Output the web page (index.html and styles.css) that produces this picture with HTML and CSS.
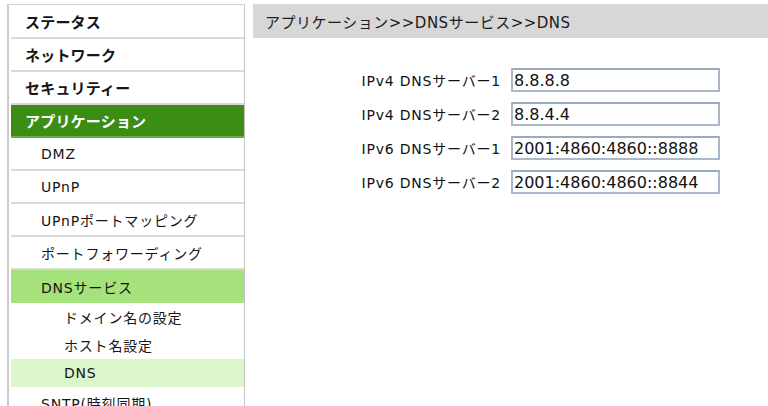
FILE: index.html
```html
<!DOCTYPE html>
<html lang="ja">
<head>
<meta charset="utf-8">
<title>DNS</title>
<link rel="stylesheet" href="styles.css">
</head>
<body>
<div class="page">
  <nav class="sidebar">
    <div class="item main">ステータス</div>
    <div class="item main">ネットワーク</div>
    <div class="item main">セキュリティー</div>
    <div class="item main active">アプリケーション</div>
    <div class="item sub">DMZ</div>
    <div class="item sub">UPnP</div>
    <div class="item sub">UPnPポートマッピング</div>
    <div class="item sub">ポートフォワーディング</div>
    <div class="item sub open">DNSサービス</div>
    <div class="item subsub">ドメイン名の設定</div>
    <div class="item subsub">ホスト名設定</div>
    <div class="item subsub current">DNS</div>
    <div class="item sub">SNTP(時刻同期)</div>
  </nav>
  <main class="content">
    <div class="crumb">アプリケーション&gt;&gt;DNSサービス&gt;&gt;DNS</div>
    <form class="form">
      <label class="label" for="v4a">IPv4 DNSサーバー1</label>
      <input class="field" id="v4a" type="text" value="8.8.8.8">
      <label class="label" for="v4b">IPv4 DNSサーバー2</label>
      <input class="field" id="v4b" type="text" value="8.8.4.4">
      <label class="label" for="v6a">IPv6 DNSサーバー1</label>
      <input class="field" id="v6a" type="text" value="2001:4860:4860::8888">
      <label class="label" for="v6b">IPv6 DNSサーバー2</label>
      <input class="field" id="v6b" type="text" value="2001:4860:4860::8844">
    </form>
  </main>
</div>
</body>
</html>
```
FILE: styles.css
```css
html, body {
  margin: 0;
  padding: 0;
  background: #ffffff;
  overflow: hidden;
}

body {
  font-family: "DejaVu Sans", "Noto Sans CJK JP", sans-serif;
  color: #1e1e1e;
  height: 406px;
}

.page {
  display: flex;
  align-items: flex-start;
  padding-top: 4px;
}

.sidebar {
  margin-left: 7px;
  width: 233px;
  border-left: 2px solid #cbcbcb;
  border-right: 1px solid #c6c6c6;
  border-top: 1px solid #d2d2d2;
  padding-left: 2px;
  padding-top: 1px;
  height: 420px;
  flex: none;
}

.item {
  box-sizing: border-box;
  display: flex;
  align-items: center;
  height: 33px;
  border-bottom: 2px solid #dadada;
  font-size: 14px;
  white-space: nowrap;
  color: #151515;
}

.main {
  padding-left: 14px;
  font-size: 15px;
  font-weight: bold;
  letter-spacing: 0.2px;
}

.sub {
  padding-left: 30px;
  letter-spacing: 0.8px;
}

.active {
  background: #3b8d13;
  color: #ffffff;
  border-bottom-color: #6aa94a;
}

.open {
  background: #a5e27b;
  border-bottom: none;
}

.subsub {
  padding-left: 53px;
  height: 28px;
  border-bottom: none;
  letter-spacing: 0.8px;
}

.current {
  background: #dcf6cc;
}

.content {
  flex: 1;
  margin-left: 8px;
}

.crumb {
  background: #d7d7d7;
  height: 34px;
  display: flex;
  align-items: center;
  padding-left: 12px;
  font-size: 15px;
  letter-spacing: 0.5px;
  color: #1c1c1c;
}

.form {
  display: grid;
  grid-template-columns: 248px 209px;
  column-gap: 10px;
  row-gap: 10px;
  margin-top: 30px;
  align-items: center;
}

.label {
  text-align: right;
  font-size: 14px;
  letter-spacing: 0.8px;
  color: #111111;
  white-space: nowrap;
}

.field {
  box-sizing: border-box;
  height: 24px;
  width: 209px;
  margin: 0;
  padding: 0 1px;
  border: 2px solid #a9b8ca;
  border-top-color: #9aaabd;
  font-family: "DejaVu Sans", sans-serif;
  font-size: 16px;
  color: #111111;
  background: #ffffff;
  outline: none;
}
```
